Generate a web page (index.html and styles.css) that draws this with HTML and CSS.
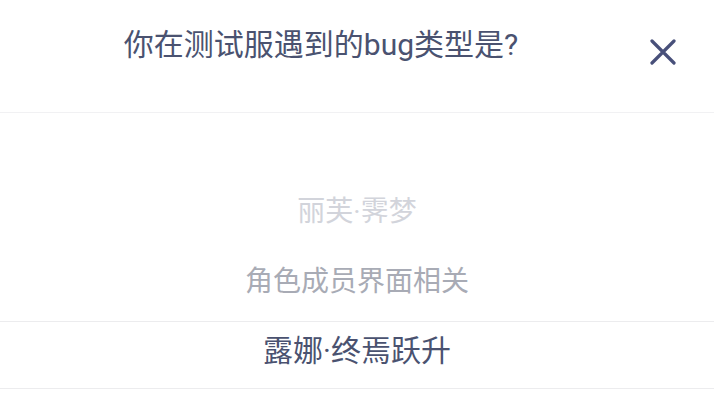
FILE: index.html
```html
<!DOCTYPE html>
<html lang="zh-CN">
<head>
<meta charset="utf-8">
<title>Bug 类型</title>
<link rel="stylesheet" href="styles.css">
</head>
<body>
  <div class="sheet">
    <header class="sheet-head">
      <h1 class="sheet-title">你在测试服遇到的bug类型是?</h1>
      <button class="close-btn" type="button" aria-label="关闭">
        <svg viewBox="0 0 26 26" width="26" height="26">
          <path d="M2 2 L24 24 M24 2 L2 24" stroke="#48507a" stroke-width="3.2" stroke-linecap="round" fill="none"/>
        </svg>
      </button>
    </header>
    <div class="picker">
      <div class="picker-item faint">丽芙·霁梦</div>
      <div class="picker-item near">角色成员界面相关</div>
      <div class="picker-item selected">露娜·终焉跃升</div>
    </div>
  </div>
</body>
</html>
```

FILE: styles.css
```css
* { box-sizing: border-box; }

html, body {
  margin: 0;
  padding: 0;
  background: #ffffff;
}

body {
  width: 720px;
  height: 404px;
  overflow: hidden;
  font-family: Roboto, "Noto Sans CJK SC", sans-serif;
}

.sheet {
  width: 714px;
}

.sheet-head {
  height: 113px;
  display: flex;
  align-items: flex-start;
  border-bottom: 1px solid #f1f1f3;
}

.sheet-title {
  flex: 1;
  margin: 0;
  padding: 25px 8px 0 0;
  text-align: center;
  font-size: 30px;
  font-weight: 400;
  line-height: 40px;
  color: #4a5270;
}

.close-btn {
  width: 26px;
  height: 26px;
  margin: 39px 38px 0 0;
  padding: 0;
  border: 0;
  background: none;
  display: flex;
}

.picker {
  padding-top: 68px;
}

.picker-item {
  height: 70px;
  display: flex;
  align-items: center;
  justify-content: center;
  font-size: 28px;
  line-height: 40px;
  padding-bottom: 9px;
}

.picker-item.faint { color: #d2d4db; }
.picker-item.near { color: #a8abb5; }

.picker-item.selected {
  height: 68px;
  font-size: 30px;
  color: #4a5270;
  border-top: 1px solid #ececee;
  border-bottom: 1px solid #ececee;
  padding-bottom: 8px;
}
```
